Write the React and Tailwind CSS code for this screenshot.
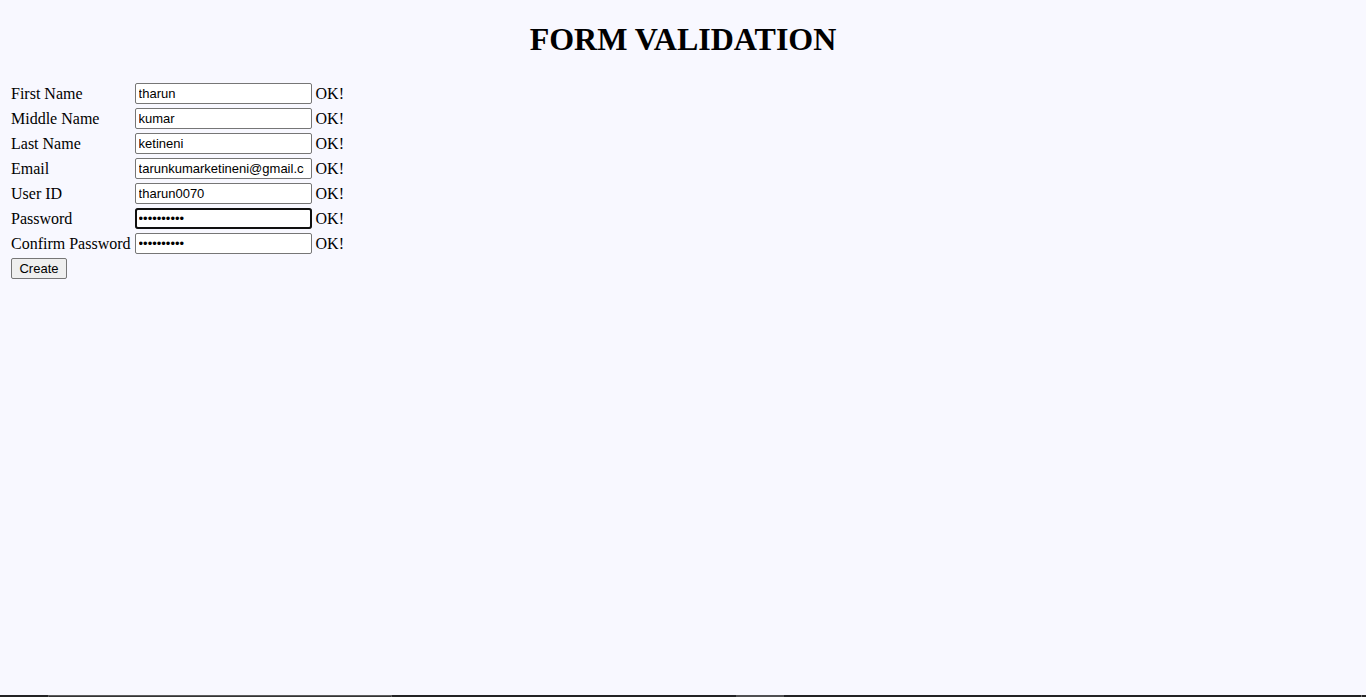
import React, { useState } from "react";

const FIELDS = [
  { id: "firstName", label: "First Name", type: "text", value: "tharun" },
  { id: "middleName", label: "Middle Name", type: "text", value: "kumar" },
  { id: "lastName", label: "Last Name", type: "text", value: "ketineni" },
  { id: "email", label: "Email", type: "text", value: "tarunkumarketineni@gmail.com" },
  { id: "userId", label: "User ID", type: "text", value: "tharun0070" },
  { id: "password", label: "Password", type: "password", value: "tharun0070", active: true },
  { id: "confirmPassword", label: "Confirm Password", type: "password", value: "tharun0070" },
];

const INPUT =
  "block h-[21px] w-[177px] border border-[#767676] bg-white py-px pl-[3px] pr-[7px] font-['Liberation_Sans',Arial,sans-serif] text-[13px] leading-[15px] text-black -outline-offset-2 outline-[#101010] focus:outline-2";

function Field({ field, value, onChange }) {
  return (
    <tr>
      <td className="p-px">
        <label htmlFor={field.id}>{field.label}</label>
      </td>
      <td className="p-px">
        <input
          id={field.id}
          type={field.type}
          value={value}
          onChange={(e) => onChange(field.id, e.target.value)}
          className={
            field.active
              ? `${INPUT} rounded-[3px] outline-2`
              : `${INPUT} rounded-[2px]`
          }
        />
      </td>
      <td className="p-px">{value ? "OK!" : ""}</td>
    </tr>
  );
}

function BottomEdge() {
  return (
    <div aria-hidden="true" className="flex h-[2px] bg-[#222224]">
      <div className="w-12" />
      <div className="w-[344px] border border-b-0 border-[#5c5c5c] bg-[#343436]" />
      <div className="w-[344px]" />
      <div className="w-12 bg-[#505052]" />
      <div className="mr-1 grow border-r border-[#707070]" />
    </div>
  );
}

export default function App() {
  const [values, setValues] = useState(() =>
    Object.fromEntries(FIELDS.map((f) => [f.id, f.value]))
  );
  const update = (id, value) => setValues((v) => ({ ...v, [id]: value }));

  return (
    <div className="flex min-h-screen flex-col bg-[#f8f8ff] font-['Liberation_Serif','Times_New_Roman',serif] text-base leading-[18px] text-black">
      <main className="grow px-2">
        <h1 className="mt-[21px] mb-[22px] text-center text-[32px] leading-[37px] font-bold">
          FORM VALIDATION
        </h1>
        <form onSubmit={(e) => e.preventDefault()}>
          <table className="border-separate border-spacing-[2px]">
            <tbody>
              {FIELDS.map((f) => (
                <Field key={f.id} field={f} value={values[f.id]} onChange={update} />
              ))}
              <tr>
                <td className="p-px">
                  <button
                    type="submit"
                    className="block h-[21px] w-14 rounded-[2px] border border-[#767676] bg-[#efefef] text-center font-['Liberation_Sans',Arial,sans-serif] text-[13px] leading-[15px] text-black"
                  >
                    Create
                  </button>
                </td>
              </tr>
            </tbody>
          </table>
        </form>
      </main>
      <BottomEdge />
    </div>
  );
}
